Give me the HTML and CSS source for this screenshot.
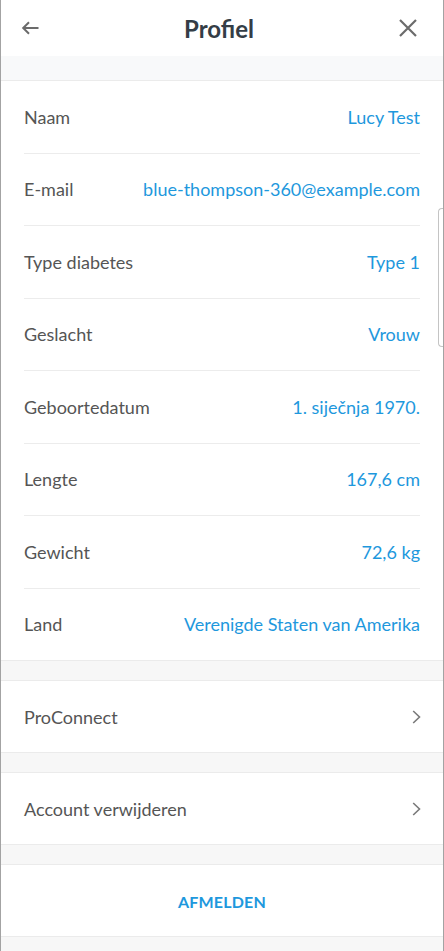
FILE: index.html
```html
<!DOCTYPE html>
<html lang="nl">
<head>
<meta charset="utf-8">
<title>Profiel</title>
<link rel="stylesheet" href="styles.css">
</head>
<body>
<div class="panel">
  <header class="topbar">
    <span class="icon-btn back">
      <svg width="18" height="14" viewBox="0 0 18 14"><path d="M17.5 7H2.2M8 1.2L2.2 7L8 12.8" fill="none" stroke="#6b6b6b" stroke-width="2"/></svg>
    </span>
    <h1 class="title">Profiel</h1>
    <span class="icon-btn close">
      <svg width="18" height="18" viewBox="0 0 18 18"><path d="M1 1L17 17M17 1L1 17" fill="none" stroke="#6b6b6b" stroke-width="2.2"/></svg>
    </span>
  </header>
  <div class="spacer top"></div>
  <section class="group">
    <div class="row"><span class="label">Naam</span><span class="value">Lucy Test</span></div>
    <div class="row"><span class="label">E-mail</span><span class="value">blue-thompson-360@example.com</span></div>
    <div class="row"><span class="label">Type diabetes</span><span class="value">Type 1</span></div>
    <div class="row"><span class="label">Geslacht</span><span class="value">Vrouw</span></div>
    <div class="row"><span class="label">Geboortedatum</span><span class="value">1. siječnja 1970.</span></div>
    <div class="row"><span class="label">Lengte</span><span class="value">167,6 cm</span></div>
    <div class="row"><span class="label">Gewicht</span><span class="value">72,6 kg</span></div>
    <div class="row"><span class="label">Land</span><span class="value">Verenigde Staten van Amerika</span></div>
  </section>
  <div class="spacer"></div>
  <section class="group">
    <div class="row link"><span class="label">ProConnect</span>
      <svg class="chev" width="9" height="14" viewBox="0 0 9 14"><path d="M1.2 1L7.5 7L1.2 13" fill="none" stroke="#7a7a7a" stroke-width="1.6"/></svg>
    </div>
  </section>
  <div class="spacer"></div>
  <section class="group">
    <div class="row link"><span class="label">Account verwijderen</span>
      <svg class="chev" width="9" height="14" viewBox="0 0 9 14"><path d="M1.2 1L7.5 7L1.2 13" fill="none" stroke="#7a7a7a" stroke-width="1.6"/></svg>
    </div>
  </section>
  <div class="spacer"></div>
  <section class="group">
    <div class="row action"><span class="logout">AFMELDEN</span></div>
  </section>
  <div class="scrollthumb"></div>
</div>
</body>
</html>
```
FILE: styles.css
```css
html, body {
  margin: 0;
  padding: 0;
  height: 100%;
  background: #ffffff;
}
body {
  font-family: Lato, "Open Sans", sans-serif;
}
.panel {
  position: relative;
  box-sizing: border-box;
  width: 444px;
  min-height: 951px;
  background: #f7f7f7;
  border-left: 1px solid #a3a3a3;
  border-right: 1px solid #a3a3a3;
  overflow: hidden;
}
.topbar {
  height: 56px;
  background: #ffffff;
  display: grid;
  grid-template-columns: 1fr auto 1fr;
  align-items: center;
  padding: 0 26px 0 20px;
}
.icon-btn {
  display: flex;
  align-items: center;
}
.back { justify-self: start; }
.close { justify-self: end; }
.title {
  margin: 0;
  font-size: 24px;
  font-weight: 700;
  color: #343d46;
  line-height: 1;
  padding-top: 1px;
}
.spacer {
  height: 19px;
  background: #f7f7f7;
}
.spacer.top {
  height: 24px;
  background: #f8f9fa;
}
.group {
  background: #ffffff;
  border-top: 1px solid #ebebeb;
  border-bottom: 1px solid #ebebeb;
  padding: 0 23px;
}
.row {
  height: 71.5px;
  display: flex;
  align-items: center;
  justify-content: space-between;
  border-bottom: 1px solid #ececec;
}
.row:last-child {
  border-bottom: none;
}
.label {
  font-size: 18px;
  color: #555555;
}
.value {
  font-size: 18px;
  color: #1e98dd;
}
.chev {
  margin-right: -1px;
}
.row.action {
  justify-content: center;
  height: 71px;
}
.row.link {
  height: 71px;
}
.logout {
  font-size: 16px;
  font-weight: 700;
  color: #1e98dd;
  letter-spacing: 0.2px;
  padding-top: 1px;
}
.scrollthumb {
  position: absolute;
  right: -1px;
  top: 208px;
  width: 5px;
  height: 137px;
  border: 1px solid #c4c4c4;
  border-right: none;
  border-radius: 4px 0 0 4px;
  background: #ffffff;
}
```
